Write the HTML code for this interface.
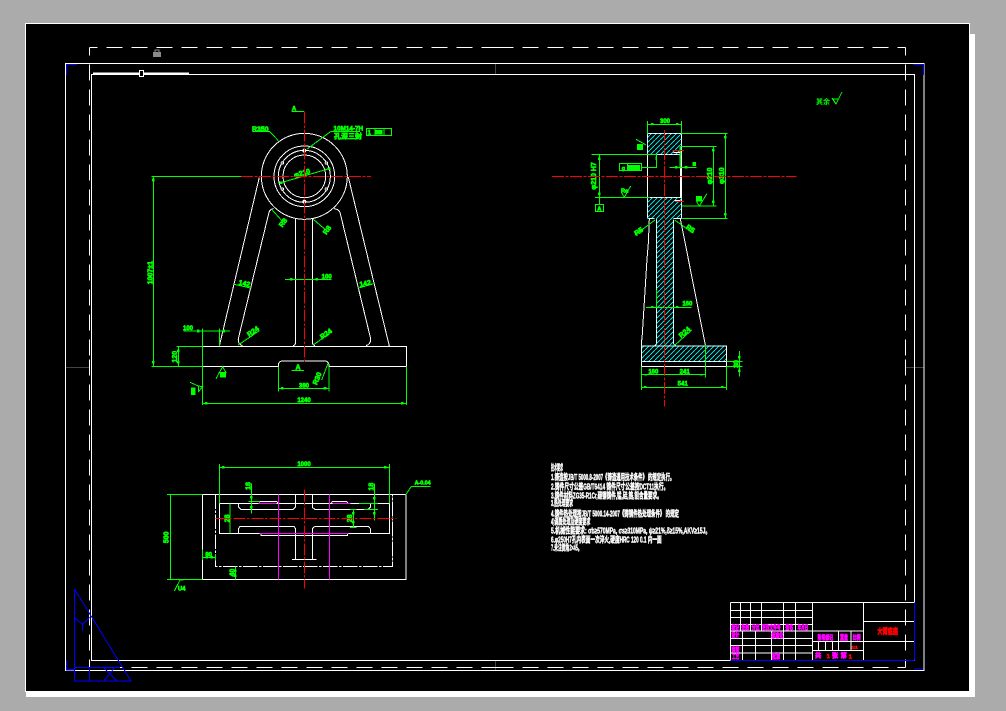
<!DOCTYPE html>
<html><head><meta charset="utf-8"><style>
html,body{margin:0;padding:0;width:1006px;height:711px;overflow:hidden;background:#ababab}
svg{position:absolute;left:0;top:0;display:block}
.w{fill:none;stroke:#fff;stroke-width:1}
.d{fill:none;stroke:#fff;stroke-width:1;stroke-dasharray:16 9;stroke-dashoffset:8}
.b{fill:none;stroke:#00f;stroke-width:1}
.z .w{stroke-width:3}.z .g{fill:none;stroke:#0f0;stroke-width:3}
.z .r{fill:none;stroke:#f00;stroke-width:3;stroke-dasharray:36 5 8 5}
.z .m{fill:none;stroke:#f0f;stroke-width:3}
.z .q{fill:none;stroke:#0f0;stroke-width:8;stroke-linecap:square}
.z .f{fill:#0f0;stroke:none}
.z .wf{fill:#fff;stroke:none}
.z .bl{fill:none;stroke:#00f;stroke-width:3}
text{font-family:"Liberation Sans","Noto Sans CJK SC",sans-serif;font-weight:700;text-anchor:middle}
.t{fill:#0f0;font-size:21px;stroke:#0f0;stroke-width:2}
.tm{fill:#f0f;font-size:19px;stroke:#f0f;stroke-width:2}
.tr{fill:#f00;font-size:24px;stroke:#f00;stroke-width:2}
.n{fill:#fff;font-size:25px;text-anchor:start;stroke:#fff;stroke-width:1.5}
</style></head><body>
<svg width="1006" height="711" viewBox="0 0 1006 711" xmlns="http://www.w3.org/2000/svg" shape-rendering="crispEdges">
<defs>
<pattern id="h" width="15" height="15" patternUnits="userSpaceOnUse"><path d="M-2 17L17 -2" stroke="#00dcdc" stroke-width="3" fill="none"/></pattern>
</defs>
<!-- sheet -->
<rect x="26" y="34" width="949" height="663" fill="#fff"/>
<rect x="25.500" y="23.500" width="944" height="668" fill="#000" stroke="#fff" stroke-width="1"/>
<!-- faint crosshair -->
<path d="M66 367.500H90M906 367.500H924M495.500 64V74M495.500 660V670" stroke="#444" stroke-width="1"/>
<!-- frames -->
<rect x="65.500" y="63.500" width="858.500" height="607" class="w"/>
<rect x="91.500" y="74.500" width="823" height="586" class="w"/>
<path class="d" d="M89.500 47.500H497.500"/>
<path class="d" d="M905.500 47.500H497.500"/>
<path class="d" d="M89.500 667.500H497.500"/>
<path class="d" d="M905.500 667.500H497.500"/>
<path class="d" d="M89.500 47.500V357"/>
<path class="d" d="M89.500 667.500V357"/>
<path class="d" d="M905.500 47.500V357"/>
<path class="d" d="M905.500 667.500V357"/>
<rect x="93" y="72.500" width="96" height="2" fill="#fff"/>
<rect x="139.500" y="70.500" width="4" height="6" fill="#000" stroke="#fff"/>
<path d="M77 64.500H66.500V75M913 64.500H923.500V75M66.500 660V669.500H75" class="b" stroke-width="1"/>
<path d="M66 64.500H77M66.500 64V75M913 64.500H924M923.500 64V75" stroke="#00f" fill="none"/>
<!-- lock -->
<rect x="153" y="52" width="8" height="5" fill="#8a8a8a"/>
<path d="M155 52V50H159V52" stroke="#8a8a8a" fill="none"/>
<!-- blue triangle -->
<path d="M74.500 589V681H131L74.500 589M74.500 667.500H120M89.500 667V681M74.500 617.500L82.500 624.500L89.500 617.500M82.500 624.500V631M103 667L117 681M115 667L104 681" class="b"/>
<path d="M66.500 660V670M66 670H74" stroke="#00f" fill="none"/>

<!-- FRONT VIEW -->
<g class="z" transform="translate(130 90) scale(.33333)">
<circle cx="523" cy="259" r="129" class="w"/>
<circle cx="523" cy="259" r="91" class="w"/>
<circle cx="523" cy="259" r="78" class="w"/>
<circle cx="523" cy="259" r="64" class="w"/>
<g class="wf">
<circle cx="523" cy="182" r="6"/><circle cx="523" cy="335" r="6"/>
<circle cx="457" cy="219" r="5"/><circle cx="589" cy="219" r="5"/><circle cx="457" cy="297" r="5"/><circle cx="589" cy="297" r="5"/>
</g>
<circle cx="457" cy="219" r="2" fill="#000"/><circle cx="589" cy="219" r="2" fill="#000"/><circle cx="457" cy="297" r="2" fill="#000"/><circle cx="589" cy="297" r="2" fill="#000"/>
<path class="w" d="M388 262L268 768M655 262L778 768M430 356Q420 357 417 367L325 746Q323 762 337 767M612 356Q625 357 630 367L722 746Q723 762 708 767M497 385V755Q497 765 489 767M547 385V755Q547 765 555 767"/>
<path class="w" d="M217 769H830V829H597V825Q595 813 585 813H458Q446 813 445 825V829H217V769"/>
<path class="g" d="M70 259V829M65 259H333M65 829H217M370 124H418L445 152M690 124H603L530 178M709 115H785V137H709ZM735 115V137M762 115V137M453 278L597 236M484 65H522M425 358L458 395M550 388L585 418M313 583L365 595M683 595L735 580M465 568H605M160 723H300M217 715V945M268 715V768M140 769H217M145 769V829M830 829V945M217 940H830M445 830V905M597 830V905M445 895H597M595 818L575 870M325 765L388 722M550 765L605 725M484 841H522M258 866L278 830L288 848H265M180 877L205 888L218 890L205 905V888"/>
<path class="f" d="M270 848H288V863H270ZM183 893H197V915H183ZM737 120H758V134H737Z"/>
<path class="q" d="M70 270h0M70 817h0M484 568h0M560 568h0M205 723h0M281 723h0M145 782h0M145 817h0M229 940h0M817 940h0M457 895h0M585 895h0M453 278h0M597 236h0"/>
<text class="t" x="391" y="124">R350</text>
<text class="t" x="655" y="122" style="font-size:19px">10M14-7H</text>
<text class="t" x="654" y="146">孔深三封</text>
<text class="t" x="718" y="134" style="font-size:18px">1</text>
<text class="t" x="492" y="62" style="font-size:18px">A</text>
<text class="t" x="504" y="838">A</text>
<text class="t" x="590" y="565" style="font-size:18px">100</text>
<text class="t" x="174" y="720" style="font-size:18px">100</text>
<text class="t" x="522" y="936" style="font-size:18px">1240</text>
<text class="t" x="522" y="893" style="font-size:18px">380</text>
<text class="t" transform="translate(68 548) rotate(-90)">1007±1</text>
<text class="t" transform="translate(141 800) rotate(-90)">120</text>
<text class="t" transform="translate(518 256) rotate(-16)">φ210</text>
<text class="t" transform="translate(465 402) rotate(-55)">R8</text>
<text class="t" transform="translate(597 424) rotate(-55)">R8</text>
<text class="t" transform="translate(342 587) rotate(12)">142</text>
<text class="t" transform="translate(707 587) rotate(-12)">142</text>
<text class="t" transform="translate(373 730) rotate(-35)">R24</text>
<text class="t" transform="translate(592 737) rotate(-35)">R24</text>
<text class="t" transform="translate(568 868) rotate(-68)">R30</text>
<path class="r" d="M523 65V815M333 259H723"/>
</g>

<!-- SIDE VIEW -->
<g class="z" transform="translate(540 100) scale(.33333)">
<path fill="url(#h)" d="M322 100H425V164H322ZM322 292H425V356H322ZM349 356H401V738H349ZM304 738H560V784H304Z"/>
<path class="w" d="M322 100H425M322 100V356M322 164H425M322 292H425M322 356H344M401 356H425M425 100V164M425 292V356M349 356V732L343 738M401 360V732L408 738M304 738H560V800H304V718M304 784H560M328 356L325 430L321 478L318 526L315 574L312 622L309 670L306 718L304 720M421 356L496 735"/>
<rect x="420" y="164" width="6" height="128" fill="#fff"/>
<path d="M322 100H425M322 164H425M322 292H425M322 356H344M349 356V738M401 356V738M304 738H560M304 784H560M425 100V164M425 292V356M322 100V164M322 292V356" fill="none" stroke="#00ffff" stroke-width="3" stroke-dasharray="3 12"/>
<path class="g" d="M322 63V100M425 63V100M322 73H425M425 100H563M425 355H563M556 100V355M420 139H530M425 318H530M520 139V318M155 163H350V202H305M168 163H178V293M165 293H330M178 293V313M166 313H191V335H166ZM238 190H305V212H238ZM262 190V212M288 118L318 135M243 275L253 292L272 258M470 305L478 318L500 282M388 202H470M318 622H455M349 570V622M345 360L285 405M404 360L460 400M403 737L455 690M304 800V870M496 735V832M560 800V870M304 823H496M304 862H560M598 753V830M560 784H608M560 800H608"/>
<rect x="418" y="139" width="5" height="66" fill="#0f0"/>
<path class="f" d="M291 132H309V150H291ZM264 195H300V210H264ZM468 288H486V304H468ZM457 186H468V198H457ZM346 170H350V180H346Z"/>
<path class="q" d="M556 112h0M556 343h0M520 151h0M520 305h0M178 176h0M178 281h0M409 202h0M438 202h0M598 772h0M598 812h0"/>
<path d="M333 71h8M408 71h8M333 620h8M408 620h8M313 824h8M480 824h8M312 860h8M543 860h8" stroke="#0f0" stroke-width="4"/>
<path class="w" d="M400 158H420M403 302H422"/>
<path d="M398 151H432M405 305H432" stroke="#f00" stroke-width="3"/>
<text class="t" x="375" y="69" style="font-size:18px">300</text>
<text class="t" x="442" y="617" style="font-size:18px">160</text>
<text class="t" x="340" y="821" style="font-size:18px">160</text>
<text class="t" x="434" y="821" style="font-size:18px">241</text>
<text class="t" x="428" y="857" style="font-size:18px">541</text>
<text class="t" x="250" y="210" style="font-size:17px">g</text>
<text class="t" x="178" y="331" style="font-size:17px">A</text>
<text class="t" x="254" y="278" style="font-size:17px">Ra</text>
<text class="t" transform="translate(552 227) rotate(-90)">φ310</text>
<text class="t" transform="translate(516 228) rotate(-90)">φ210</text>
<text class="t" transform="translate(168 228) rotate(-90)">φ210 H7</text>
<text class="t" transform="translate(596 792) rotate(-90)">30</text>
<text class="t" transform="translate(300 400) rotate(-35)">R5</text>
<text class="t" transform="translate(447 392) rotate(35)">R5</text>
<text class="t" transform="translate(438 702) rotate(-40)">R24</text>
<path class="r" d="M36 229H770M373 90V920"/>
</g>

<!-- TOP VIEW -->
<g class="z" transform="translate(150 450) scale(.33333)">
<path class="w" d="M158 133H768V388H158ZM208 160H718V250H208ZM436 133V172L430 178H272L265 170V160M487 133V172L495 178H655L662 170V160M265 250V237L270 229H432L436 235V328M487 328V235L495 229H655L662 237V250M426 328H500M327 157L330 154H380L385 160M544 160L547 154H590L594 160M333 250V257H592V250"/>
<path d="M196 133V350H728V133" fill="none" stroke="#fff" stroke-width="3" stroke-dasharray="44 4 8 4"/>
<path class="m" d="M385 133V388M538 133V388M325 160H380M547 160H602M328 250H596"/>
<path class="g" d="M208 42V160M718 42V160M208 52H718M51 133H158M51 388H158M61 133V388M304 100V190M296 155H330M673 100V212M627 160H684M642 178H684M610 178V232M600 178H620M600 232H620M240 160V250M158 298V330M197 312V332M158 322H197M256 350V388M767 135L784 109H842M73 423L90 390H100"/>
<path class="q" d="M220 52h0M706 52h0M304 142h0M304 172h0M673 145h0M673 190h0M610 190h0M610 217h0M170 322h0M185 322h0M256 362h0M256 377h0"/>
<text class="t" x="462" y="48" style="font-size:18px">1000</text>
<text class="t" transform="translate(56 262) rotate(-90)">500</text>
<text class="t" transform="translate(302 108) rotate(-90)">18</text>
<text class="t" transform="translate(671 110) rotate(-90)">18</text>
<text class="t" transform="translate(606 205) rotate(-90)">28</text>
<text class="t" transform="translate(238 205) rotate(-90)">28</text>
<text class="t" transform="translate(253 368) rotate(-90)">40</text>
<text class="t" x="176" y="320" style="font-size:18px">80</text>
<text class="t" x="95" y="421" style="font-size:18px">U4</text>
<text class="t" x="818" y="104" style="font-size:16px">A-0.04</text>
<path class="r" d="M463 118V415M196 205H740"/>
</g>

<!-- NOTES -->
<g class="z" transform="translate(540 460) scale(.33333)">
<text class="n" x="33" y="32" textLength="36" lengthAdjust="spacingAndGlyphs">技术要求</text>
<text class="n" x="33" y="60" textLength="370" lengthAdjust="spacingAndGlyphs">1.铸造按JB/T 5000.8-2007《铸造通用技术条件》 的规定执行。</text>
<text class="n" x="33" y="88" textLength="352" lengthAdjust="spacingAndGlyphs">2.铸件尺寸公差GB/T6414 铸件尺寸公差按DCT11执行。</text>
<text class="n" x="33" y="115" textLength="332" lengthAdjust="spacingAndGlyphs">3.铸件材料ZG35-R1Cr,碳钢铸件,锰,硅,铬,钼含量要求。</text>
<text class="n" x="33" y="138" textLength="66" lengthAdjust="spacingAndGlyphs">3.热处理要求</text>
<text class="n" x="33" y="170" textLength="384" lengthAdjust="spacingAndGlyphs">4.铸件热处理按JB/T 5000.14-2007《铸钢件热处理条件》 的规定</text>
<text class="n" x="33" y="193" textLength="118" lengthAdjust="spacingAndGlyphs">4)调质处理及硬度要求</text>
<text class="n" x="33" y="220" textLength="478" lengthAdjust="spacingAndGlyphs">5.机械性能要求: σb≥570MPa, σs≥310MPa, ψ≥21%,δ≥15%,AKV≥15J。</text>
<text class="n" x="33" y="247" textLength="332" lengthAdjust="spacingAndGlyphs">6.φ250H7孔内表面一次淬火,硬度HRC 120  0.1 内一面</text>
<text class="n" x="33" y="272" textLength="92" lengthAdjust="spacingAndGlyphs">7.未注倒角2×45。</text>
</g>

<!-- TITLE BLOCK -->
<g class="z" transform="translate(720 595) scale(.33333)">
<path class="w" d="M31 22H585M31 22V197M31 46H277M31 68H277M31 88H277M31 108H430M31 130H277M31 152H277M31 174H277M61 22V108M91 22V108M124 22V108M190 22V197M226 22V197M277 22V197M67 108V197M106 108V197M154 108V197M430 22V197M430 79H582M430 139H582M277 139H430M277 166H430M355 108V166M393 108V166M296 139V166M316 139V166M337 139V166M0 197H31"/>
<path class="bl" d="M584 22V197M31 197H584M582 222H610"/>
<path class="w" d="M612 0V225"/>
<g class="tm">
<text x="46" y="104" textLength="24" lengthAdjust="spacingAndGlyphs" class="tm">标记</text>
<text x="76" y="104" textLength="24" lengthAdjust="spacingAndGlyphs" class="tm">处数</text>
<text x="107" y="104" textLength="24" lengthAdjust="spacingAndGlyphs" class="tm">分区</text>
<text x="154" y="104" textLength="56" lengthAdjust="spacingAndGlyphs" class="tm">更改文件号</text>
<text x="208" y="104" textLength="24" lengthAdjust="spacingAndGlyphs" class="tm">签名</text>
<text x="249" y="104" textLength="32" lengthAdjust="spacingAndGlyphs" class="tm">年月日</text>
<text x="46" y="126" textLength="24" lengthAdjust="spacingAndGlyphs" class="tm">设计</text>
<text x="172" y="127" textLength="36" lengthAdjust="spacingAndGlyphs" class="tm">标准化</text>
<text x="46" y="169" textLength="24" lengthAdjust="spacingAndGlyphs" class="tm">审核</text>
<text x="47" y="190" textLength="22" lengthAdjust="spacingAndGlyphs" class="tm">工艺</text>
<text x="168" y="190" textLength="24" lengthAdjust="spacingAndGlyphs" class="tm">批准</text>
<text x="316" y="133" textLength="46" lengthAdjust="spacingAndGlyphs" class="tm">阶段标记</text>
<text x="372" y="133" textLength="24" lengthAdjust="spacingAndGlyphs" class="tm">重量</text>
<text x="410" y="133" textLength="24" lengthAdjust="spacingAndGlyphs" class="tm">比例</text>
<text x="294" y="187" class="tm">共</text>
<text x="345" y="187" class="tm">张</text>
<text x="371" y="187" class="tm">第</text>
</g>
<text class="tr" x="325" y="189" style="font-size:17px">1</text>
<text class="tr" x="391" y="190" style="font-size:17px">1</text>
<text class="tr" x="404" y="160" style="font-size:12px">1:1</text>
<text class="tr" x="503" y="117" textLength="62" lengthAdjust="spacingAndGlyphs">大臂底座</text>
</g>

<!-- roughness top right -->
<text x="823" y="104" style="font-size:7px;fill:#0f0">其余</text>
<path d="M832 98L836 104L842 92M836 104L833 99H838" fill="none" stroke="#0f0"/>
</svg>
</body></html>
